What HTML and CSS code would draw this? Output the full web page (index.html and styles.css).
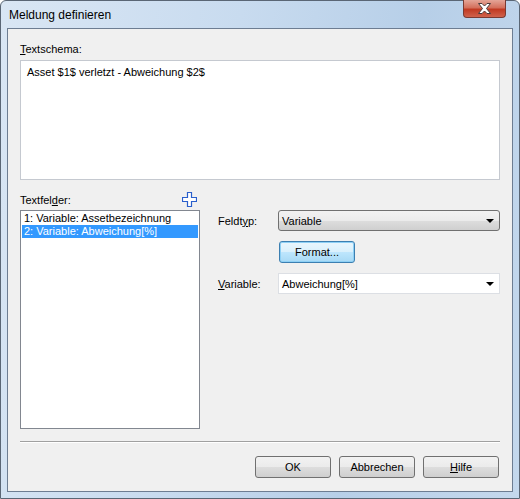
FILE: index.html
```html
<!DOCTYPE html>
<html lang="de">
<head>
    <meta charset="UTF-8">
    <meta name="viewport" content="width=device-width, initial-scale=1.0">
    <link rel="stylesheet" href="styles.css">
    <title>Meldung definieren</title>
</head>
<body>
    <div class="window">
        <div class="titlebar">
            <span class="title">Meldung definieren</span>
            <div class="close">
                <svg width="15" height="11" viewBox="0 0 15 11">
                    <path d="M1.5 0.5 H5 L7.5 3 L10 0.5 H13.5 L9.5 5.5 L13.5 10.5 H10 L7.5 8 L5 10.5 H1.5 L5.5 5.5 Z" fill="#ffffff" stroke="#4a3a3a" stroke-width="1"/>
                </svg>
            </div>
        </div>
        <div class="client">
            <div class="label"><u>T</u>extschema:</div>
            <div class="textarea">Asset $1$ verletzt - Abweichung $2$</div>

            <div class="fields-head">
                <span>Textfel<u>d</u>er:</span>
                <svg class="plus" width="15" height="15" viewBox="0 0 15 15">
                    <path d="M5.5 0.5 H9.5 V5.5 H14.5 V9.5 H9.5 V14.5 H5.5 V9.5 H0.5 V5.5 H5.5 Z" fill="#ffffff" stroke="#2a5fcc" stroke-width="1.2"/>
                </svg>
            </div>

            <div class="fields">
                <ul class="list">
                    <li>1: Variable: Assetbezeichnung</li>
                    <li class="selected">2: Variable: Abweichung[%]</li>
                </ul>
                <div class="props">
                    <div class="row">
                        <span class="row-label">Feldt<u>y</u>p:</span>
                        <div class="combo combo-button">
                            <span>Variable</span>
                            <span class="arrow"></span>
                        </div>
                    </div>
                    <div class="row">
                        <button class="btn btn-format">Format...</button>
                    </div>
                    <div class="row">
                        <span class="row-label"><u>V</u>ariable:</span>
                        <div class="combo combo-edit">
                            <span>Abweichung[%]</span>
                            <span class="arrow"></span>
                        </div>
                    </div>
                </div>
            </div>

            <hr class="separator">

            <div class="buttons">
                <button class="btn">OK</button>
                <button class="btn">Abbrechen</button>
                <button class="btn"><u>H</u>ilfe</button>
            </div>
        </div>
    </div>
</body>
</html>
```

FILE: styles.css
```css
body {
    margin: 0;
    font-family: "Liberation Sans", Arial, sans-serif;
    font-size: 11px;
    color: #000000;
    background-color: #ffffff;
}

.window {
    width: 520px;
    height: 499px;
    box-sizing: border-box;
    display: flex;
    flex-direction: column;
    border: 1px solid #5a6675;
    border-radius: 6px 6px 0 0;
    background: linear-gradient(100deg, #d9e6f4 0%, #c8dbef 40%, #b7cfe8 70%, #c4d8ed 100%);
}

.titlebar {
    height: 27px;
    display: flex;
    justify-content: space-between;
    align-items: flex-start;
}

.title {
    font-size: 12px;
    margin: 7px 0 0 8px;
}

.close {
    width: 43px;
    height: 18px;
    margin-right: 13px;
    margin-top: -1px;
    box-sizing: border-box;
    border: 1px solid #7a3a32;
    border-top: none;
    border-radius: 0 0 4px 4px;
    background: linear-gradient(#e4a597 0%, #d4705c 45%, #c13a22 55%, #d0624c 100%);
    display: flex;
    align-items: center;
    justify-content: center;
}

.client {
    height: 464px;
    margin: 0 6px 6px 6px;
    box-sizing: border-box;
    border: 1px solid #6d7d92;
    background-color: #f0f0f0;
    padding: 14px 12px 0 12px;
}

.label {
    height: 13px;
    line-height: 13px;
    margin-bottom: 4px;
}

.textarea {
    height: 120px;
    box-sizing: border-box;
    border: 1px solid #c5c9d0;
    background-color: #ffffff;
    padding: 4px 6px;
    line-height: 14px;
}

.fields-head {
    width: 180px;
    height: 14px;
    margin-top: 13px;
    margin-bottom: 3px;
    display: flex;
    justify-content: space-between;
    line-height: 14px;
}

.plus {
    margin-top: -1px;
    margin-right: 3px;
}

.fields {
    display: flex;
    height: 219px;
}

.list {
    list-style-type: none;
    margin: 0;
    width: 180px;
    box-sizing: border-box;
    border: 1px solid #828790;
    background-color: #ffffff;
    padding: 1px;
}

.list li {
    height: 13px;
    line-height: 13px;
    padding-left: 2px;
}

.list .selected {
    background-color: #3399ff;
    color: #ffffff;
}

.props {
    flex: 1;
    padding-left: 18px;
    display: flex;
    flex-direction: column;
    gap: 10px;
}

.row {
    display: flex;
    align-items: center;
}

.row-label {
    width: 60px;
}

.combo {
    width: 222px;
    height: 21px;
    box-sizing: border-box;
    display: flex;
    align-items: center;
    justify-content: space-between;
    padding: 0 5px 0 3px;
}

.combo-button {
    border: 1px solid #707070;
    border-radius: 3px;
    background: linear-gradient(#f2f2f2 0%, #ebebeb 50%, #dddddd 51%, #cfcfcf 100%);
}

.combo-edit {
    border: 1px solid #dcdfe4;
    background-color: #ffffff;
}

.arrow {
    width: 0;
    height: 0;
    border-left: 4px solid transparent;
    border-right: 4px solid transparent;
    border-top: 4px solid #000000;
}

.btn {
    width: 76px;
    height: 22px;
    box-sizing: border-box;
    font-family: "Liberation Sans", Arial, sans-serif;
    font-size: 11px;
    color: #000000;
    border: 1px solid #707070;
    border-radius: 3px;
    background: linear-gradient(#f2f2f2 0%, #ebebeb 50%, #dddddd 51%, #cfcfcf 100%);
    padding: 0;
}

.btn-format {
    margin-left: 61px;
    border-color: #3c7fb1;
    box-shadow: inset 0 0 0 1px #8ed0f5;
    background: linear-gradient(#eaf6fd 0%, #d9f0fc 50%, #bee6fd 51%, #a7d9f5 100%);
}

.separator {
    margin: 12px 0 0 0;
    border: none;
    border-top: 1px solid #a0a0a0;
    border-bottom: 1px solid #ffffff;
}

.buttons {
    margin-top: 13px;
    display: flex;
    justify-content: flex-end;
    gap: 8px;
    padding-right: 1px;
}
```
